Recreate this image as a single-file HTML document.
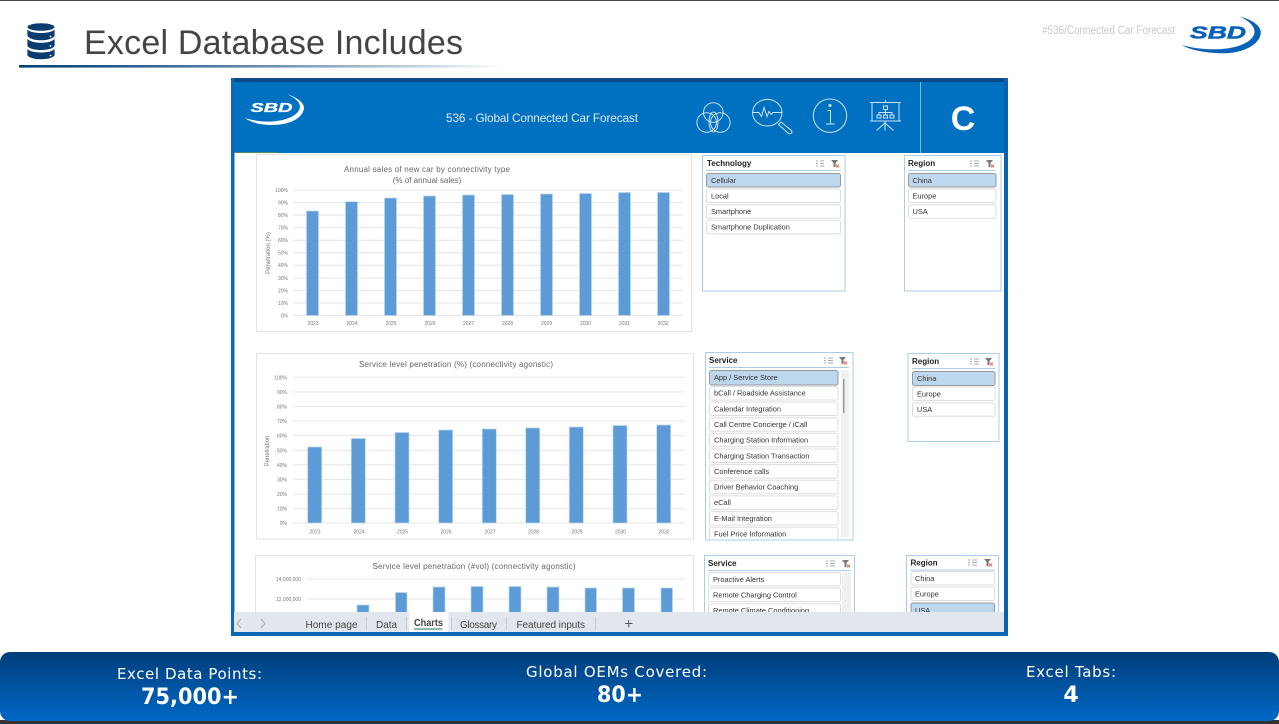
<!DOCTYPE html>
<html><head><meta charset="utf-8"><title>Excel Database Includes</title>
<style>
html,body{margin:0;padding:0;background:#fff}
body{width:1279px;height:724px;overflow:hidden}
svg{display:block}
text{font-family:"Liberation Sans",sans-serif}
.dj{font-family:"DejaVu Sans",sans-serif}
.ax{font-size:5px;fill:#777}
.t{font-size:8px;fill:#666}
.st{font-size:8px;font-weight:bold;fill:#222}
.it{font-size:7.4px;fill:#333}
.tab{font-size:10px;fill:#444}
</style></head><body>
<svg width="1279" height="724" viewBox="0 0 1279 724" xmlns="http://www.w3.org/2000/svg">
<defs>
<linearGradient id="ul" x1="0" x2="1" y1="0" y2="0"><stop offset="0" stop-color="#004078"/><stop offset=".25" stop-color="#2f6393"/><stop offset="1" stop-color="#004078" stop-opacity="0"/></linearGradient>
<linearGradient id="ft" x1="0" x2="0" y1="0" y2="1"><stop offset="0" stop-color="#003d7a"/><stop offset="1" stop-color="#0068c6"/></linearGradient>
<filter id="b" x="0" y="0" width="100%" height="100%"><feGaussianBlur stdDeviation="0.3"/></filter>
<clipPath id="sv1"><rect x="706" y="369" width="146" height="170"/></clipPath>
</defs>
<rect width="1279" height="724" fill="#fff"/>
<rect width="1279" height="1" fill="#444"/>

<!-- DB icon -->
<g fill="#0b3c70">
<ellipse cx="41" cy="27" rx="13.5" ry="3.8"/>
<path d="M27.4 29.5C30 32 35 33 41 33s11-1 13.6-3.5V36c-2 3-8 4.300-13.600 4.300S29.400 39 27.400 36z"/>
<path d="M27.400 39C30 41.500 35 42.800 41 42.800s11-1.300 13.600-3.800v7c-2 3-8 4-13.600 4s-11.600-1-13.600-4z"/>
<path d="M27.400 49C30 51.500 35 52.500 41 52.500s11-1 13.600-3.500v6.500C52.600 58 47 59.200 41 59.200s-11.600-1.200-13.600-3.700z"/>
</g>
<g fill="#fff"><circle cx="50.500" cy="36.500" r=".9"/><circle cx="50.500" cy="46" r=".9"/><circle cx="50.500" cy="55.500" r=".9"/></g>

<text x="84" y="54" font-size="34" fill="#444" textLength="379" lengthAdjust="spacing">Excel Database Includes</text>
<rect x="19" y="65" width="487" height="2.600" fill="url(#ul)"/>

<text x="1042" y="34" font-size="11.500" fill="#c9c9c9" textLength="133" lengthAdjust="spacingAndGlyphs">#536/Connected Car Forecast</text>
<text x="1190" y="38.300" font-size="17.500" font-weight="bold" font-style="italic" fill="#0a62b8" stroke="#0a62b8" stroke-width=".5" textLength="56" lengthAdjust="spacingAndGlyphs">SBD</text>
<path d="M1240 16.500C1253 20 1261 26 1260.800 33C1260 45 1242 53.500 1223 53.300C1205 53 1190 50 1181.700 45C1194 48.500 1208 50 1222 49C1240 47.500 1254 41 1254.500 32C1254.500 26 1249 21 1240 16.500Z" fill="#0a62b8"/>

<g filter="url(#b)">
<!-- Excel frame -->
<rect x="231" y="78" width="777" height="558" fill="#fff"/>
<rect x="231" y="78" width="777" height="4" fill="#0a4a84"/>
<rect x="231" y="78" width="3.500" height="558" fill="#0a68b8"/>
<rect x="1004" y="78" width="4" height="558" fill="#0a62b0"/>
<rect x="234" y="82" width="770" height="71" fill="#0070c0"/>
<rect x="234" y="152" width="44" height="1" fill="#4f8a5c"/>
<rect x="920" y="82" width="1" height="71" fill="#7fb2dd"/>
<text x="250.500" y="112" font-size="13" font-weight="bold" font-style="italic" fill="#fff" stroke="#fff" stroke-width=".3" textLength="42" lengthAdjust="spacingAndGlyphs">SBD</text>
<path d="M287 94C298 98 304 103 304 108C303 118 290 125 272 125C260 125 250 122 245 118C254 121 264 122 272 121.500C287 120.500 299 115 300 107C300 102 295 98 287 94Z" fill="#fff"/>
<text x="446" y="122" font-size="11.800" fill="#dfeaf5" textLength="192" lengthAdjust="spacing">536 - Global Connected Car Forecast</text>
<text x="963" y="130" font-size="34" font-weight="bold" fill="#fff" text-anchor="middle">C</text>

<!-- header icons -->
<g fill="none" stroke="#cfe2f3" stroke-width="1">
<circle cx="713.300" cy="112.500" r="9.800"/><circle cx="706.700" cy="122.500" r="9.800"/><circle cx="720.300" cy="122.500" r="9.800"/>
<ellipse cx="713.500" cy="122" rx="4.500" ry="10"/>
<ellipse cx="767.300" cy="112.700" rx="14.700" ry="13.300"/>
<path d="M753 112.500h6l2.500 4 2.500-9 3 9 2-5 2 3 2-2h9"/>
<path d="M778.500 124.500l2.500-2.500 10.500 8.500c1.500 2-1 4-3 3z"/>
<circle cx="830" cy="115.700" r="16.700"/>
<path d="M827.500 110.500h3v13M826 124h8.500"/><circle cx="830" cy="105.500" r="1" fill="#cfe2f3"/>
<path d="M870 102.500h31M872 102.500v18.500M899 102.500v18.500M870 121h31M885.500 100v2.500M885 121v2M885 123l-8.500 7.500M885 123l8.500 7.500M885 123v7.500"/>
<path d="M885.500 109.500v3M879 115v-2.500h13v2.500M885.500 112.500v2.500"/>
<rect x="883.500" y="106" width="4" height="3.500"/><rect x="877" y="115" width="4" height="3"/><rect x="883.500" y="115" width="4" height="3"/><rect x="890" y="115" width="4" height="3"/>
</g>

<!-- Chart 1 -->
<rect x="256.500" y="154.500" width="435" height="177" fill="#fff" stroke="#e2e2e2"/>
<text x="427" y="172" class="t" text-anchor="middle" textLength="166" lengthAdjust="spacing">Annual sales of new car by connectivity type</text>
<text x="427" y="183" class="t" text-anchor="middle">(% of annual sales)</text>
<path stroke="#e4e4e4" stroke-width="1" d="M293 190H683M293 202.600H683M293 215.100H683M293 227.700H683M293 240.200H683M293 252.800H683M293 265.300H683M293 277.900H683M293 290.400H683M293 303H683M293 315.500H683"/>
<g fill="#5b9bd5" stroke="#bcd7ef" stroke-width=".7">
<rect x="306.500" y="211" width="12" height="104.500"/><rect x="345.500" y="201.700" width="12" height="113.800"/><rect x="384.500" y="198" width="12" height="117.500"/><rect x="423.500" y="196" width="12" height="119.500"/><rect x="462.500" y="195" width="12" height="120.500"/><rect x="501.500" y="194.500" width="12" height="121"/><rect x="540.500" y="194" width="12" height="121.500"/><rect x="579.500" y="193.500" width="12" height="122"/><rect x="618.500" y="192.500" width="12" height="123"/><rect x="657.500" y="192.500" width="12" height="123"/>
</g>
<g class="ax" text-anchor="end"><text x="288" y="192">100%</text><text x="288" y="204.500">90%</text><text x="288" y="217">80%</text><text x="288" y="229.500">70%</text><text x="288" y="242">60%</text><text x="288" y="254.700">50%</text><text x="288" y="267">40%</text><text x="288" y="279.800">30%</text><text x="288" y="292.300">20%</text><text x="288" y="305">10%</text><text x="288" y="317.500">0%</text></g>
<g class="ax" text-anchor="middle"><text x="313" y="325">2023</text><text x="352" y="325">2024</text><text x="391" y="325">2025</text><text x="430" y="325">2026</text><text x="468.500" y="325">2027</text><text x="507.500" y="325">2028</text><text x="546.500" y="325">2029</text><text x="585.500" y="325">2030</text><text x="624.500" y="325">2031</text><text x="663" y="325">2032</text></g>
<text transform="translate(270,253) rotate(-90)" font-size="6" fill="#777" text-anchor="middle">Penetration (%)</text>

<!-- Chart 2 -->
<rect x="256.500" y="353.500" width="437" height="185.500" fill="#fff" stroke="#e2e2e2"/>
<text x="456" y="367" class="t" text-anchor="middle" font-size="8.500" textLength="194" lengthAdjust="spacing">Service level penetration (%) (connectivity agonstic)</text>
<path stroke="#e6e6e6" stroke-width="1" d="M293 377.300H685M293 391.900H685M293 406.500H685M293 421H685M293 435.600H685M293 450.200H685M293 464.800H685M293 479.400H685M293 494H685M293 508.600H685M293 523H685"/>
<g fill="#5b9bd5" stroke="#bcd7ef" stroke-width=".7">
<rect x="307.700" y="447" width="14" height="76"/><rect x="351.300" y="438.500" width="14" height="84.500"/><rect x="395" y="432.500" width="14" height="90.500"/><rect x="438.700" y="430" width="14" height="93"/><rect x="482.300" y="429" width="14" height="94"/><rect x="525.700" y="428" width="14" height="95"/><rect x="569.300" y="427" width="14" height="96"/><rect x="613" y="425.500" width="14" height="97.500"/><rect x="656.700" y="425" width="14" height="98"/>
</g>
<g class="ax" text-anchor="end"><text x="287" y="379.500">100%</text><text x="287" y="394">90%</text><text x="287" y="408.600">80%</text><text x="287" y="423">70%</text><text x="287" y="437.700">60%</text><text x="287" y="452.300">50%</text><text x="287" y="467">40%</text><text x="287" y="481.500">30%</text><text x="287" y="496">20%</text><text x="287" y="510.700">10%</text><text x="287" y="525">0%</text></g>
<g class="ax" text-anchor="middle"><text x="315" y="533.500">2023</text><text x="359" y="533.500">2024</text><text x="402.500" y="533.500">2025</text><text x="446" y="533.500">2026</text><text x="490" y="533.500">2027</text><text x="533.500" y="533.500">2028</text><text x="577" y="533.500">2029</text><text x="620.500" y="533.500">2030</text><text x="664" y="533.500">2032</text></g>
<text transform="translate(269,451) rotate(-90)" font-size="6" fill="#777" text-anchor="middle">Penetration</text>

<!-- Chart 3 -->
<rect x="255.500" y="555.500" width="438" height="70" fill="#fff" stroke="#e2e2e2"/>
<text x="474" y="569" class="t" text-anchor="middle" textLength="203" lengthAdjust="spacing">Service level penetration (#vol) (connectivity agonstic)</text>
<path stroke="#e4e4e4" d="M307 579H685M307 599H685"/>
<g fill="#5b9bd5" stroke="#bcd7ef" stroke-width=".7">
<rect x="357" y="605" width="12" height="10"/><rect x="395.500" y="592.500" width="11.500" height="22"/><rect x="433" y="587" width="12" height="28"/><rect x="471" y="586.500" width="12" height="28"/><rect x="509" y="586.500" width="12" height="28"/><rect x="547" y="587" width="12" height="28"/><rect x="585" y="588" width="11.500" height="28"/><rect x="622.500" y="588" width="12" height="28"/><rect x="661" y="588" width="11.500" height="28"/>
</g>
<g class="ax" text-anchor="end"><text x="301" y="581">14,000,000</text><text x="301" y="601">12,000,000</text></g>

<!-- Slicer: Technology -->
<rect x="702.500" y="155.500" width="142.500" height="135.500" fill="#fff" stroke="#a9cdea"/>
<text x="707" y="166" class="st">Technology</text>
<path stroke="#a9cdea" d="M706 170.500H841"/>
<rect x="706.500" y="173.500" width="134" height="13.500" rx="2" fill="#bdd7ee" stroke="#999"/>
<rect x="706.500" y="189" width="134" height="13.500" rx="2" fill="#fff" stroke="#ddd"/>
<rect x="706.500" y="204.700" width="134" height="13.500" rx="2" fill="#fff" stroke="#ddd"/>
<rect x="706.500" y="220.300" width="134" height="13.500" rx="2" fill="#fff" stroke="#ddd"/>
<text x="711" y="183" class="it">Cellular</text><text x="711" y="198.500" class="it">Local</text><text x="711" y="214" class="it">Smartphone</text><text x="711" y="229.700" class="it">Smartphone Duplication</text>
<path stroke="#aaa" fill="none" d="M820 161h4M820 163.500h4M820 166h4M816 161h2M816 163.500h2M816 166h2"/>
<path fill="#777" d="M831 160h7l-2.500 3v4h-2v-4z"/><path stroke="#e2705a" d="M836 164.500l3 3M839 164.500l-3 3"/>

<!-- Slicer: Region 1 -->
<rect x="904.500" y="155.500" width="96.500" height="135.500" fill="#fff" stroke="#a9cdea"/>
<text x="908" y="166" class="st">Region</text>
<path stroke="#a9cdea" d="M908 170.500H996"/>
<rect x="908.500" y="173.500" width="87.500" height="13.500" rx="2" fill="#bdd7ee" stroke="#999"/>
<rect x="908.500" y="189" width="87.500" height="13.500" rx="2" fill="#fff" stroke="#ddd"/>
<rect x="908.500" y="204.700" width="87.500" height="13.500" rx="2" fill="#fff" stroke="#ddd"/>
<text x="912.500" y="183" class="it">China</text><text x="912.500" y="198.500" class="it">Europe</text><text x="912.500" y="214" class="it">USA</text>
<path stroke="#aaa" fill="none" d="M974 161h5M974 163.500h5M974 166h5M970 161h2M970 163.500h2M970 166h2"/>
<path fill="#777" d="M986 160h7l-2.500 3v4h-2v-4z"/><path stroke="#e2705a" d="M991 164.500l3 3M994 164.500l-3 3"/>

<!-- Slicer: Service -->
<rect x="705.500" y="352.500" width="147.500" height="187.500" fill="#fff" stroke="#a9cdea"/>
<text x="709" y="363" class="st">Service</text>
<path stroke="#a9cdea" d="M709 367.500H849"/>
<rect x="841" y="370" width="8" height="167" fill="#f0f0f0"/>
<rect x="843" y="379" width="1.500" height="34" fill="#999"/>
<g clip-path="url(#sv1)">
<rect x="709.500" y="370.500" width="128.500" height="14.500" rx="2" fill="#bdd7ee" stroke="#999"/>
<g fill="#fff" stroke="#ddd">
<rect x="709.500" y="386.500" width="128.500" height="13.500" rx="2"/><rect x="709.500" y="402" width="128.500" height="13.500" rx="2"/><rect x="709.500" y="417.700" width="128.500" height="13.500" rx="2"/><rect x="709.500" y="433.300" width="128.500" height="13.500" rx="2"/><rect x="709.500" y="449" width="128.500" height="13.500" rx="2"/><rect x="709.500" y="464.600" width="128.500" height="13.500" rx="2"/><rect x="709.500" y="480.300" width="128.500" height="13.500" rx="2"/><rect x="709.500" y="495.900" width="128.500" height="13.500" rx="2"/><rect x="709.500" y="511.600" width="128.500" height="13.500" rx="2"/><rect x="709.500" y="527.200" width="128.500" height="13.500" rx="2"/>
</g>
<text x="714" y="380" class="it">App / Service Store</text><text x="714" y="395.700" class="it">bCall / Roadside Assistance</text><text x="714" y="411.300" class="it">Calendar Integration</text><text x="714" y="427" class="it">Call Centre Concierge / iCall</text><text x="714" y="442.600" class="it">Charging Station Information</text><text x="714" y="458.300" class="it">Charging Station Transaction</text><text x="714" y="473.900" class="it">Conference calls</text><text x="714" y="489.600" class="it">Driver Behavior Coaching</text><text x="714" y="505.200" class="it">eCall</text><text x="714" y="520.900" class="it">E-Mail Integration</text><text x="714" y="536.500" class="it">Fuel Price Information</text>
</g>
<path stroke="#aaa" fill="none" d="M828 358h5M828 360.500h5M828 363h5M824 358h2M824 360.500h2M824 363h2"/>
<path fill="#777" d="M839 357h7l-2.500 3v4h-2v-4z"/><path stroke="#e2705a" d="M844 361.500l3 3M847 361.500l-3 3"/>

<!-- Slicer: Region 2 -->
<rect x="908" y="353.500" width="91" height="88" fill="#fff" stroke="#a9cdea"/>
<text x="912" y="364" class="st">Region</text>
<path stroke="#a9cdea" d="M912 368.500H995"/>
<rect x="912.500" y="371.500" width="82.500" height="14" rx="2" fill="#bdd7ee" stroke="#999"/>
<rect x="912.500" y="387" width="82.500" height="13.500" rx="2" fill="#fff" stroke="#ddd"/>
<rect x="912.500" y="402.700" width="82.500" height="13.500" rx="2" fill="#fff" stroke="#ddd"/>
<text x="917" y="381" class="it">China</text><text x="917" y="396.500" class="it">Europe</text><text x="917" y="412" class="it">USA</text>
<path stroke="#aaa" fill="none" d="M974 359h5M974 361.500h5M974 364h5M970 359h2M970 361.500h2M970 364h2"/>
<path fill="#777" d="M985 358h7l-2.500 3v4h-2v-4z"/><path stroke="#e2705a" d="M990 362.500l3 3M993 362.500l-3 3"/>

<!-- Slicer: Service 3 -->
<rect x="704.500" y="555.500" width="150" height="70" fill="#fff" stroke="#a9cdea"/>
<text x="708" y="566" class="st">Service</text>
<path stroke="#a9cdea" d="M708 570.500H851"/>
<rect x="842" y="572" width="9" height="45" fill="#f0f0f0"/>
<g fill="#fff" stroke="#ddd"><rect x="708.500" y="572.500" width="132" height="13.500" rx="2"/><rect x="708.500" y="588" width="132" height="13.500" rx="2"/><rect x="708.500" y="603.700" width="132" height="13.500" rx="2"/></g>
<text x="713" y="582" class="it">Proactive Alerts</text><text x="713" y="597.500" class="it">Remote Charging Control</text><text x="713" y="613" class="it">Remote Climate Conditioning</text>
<path stroke="#aaa" fill="none" d="M830 561h5M830 563.500h5M830 566h5M826 561h2M826 563.500h2M826 566h2"/>
<path fill="#777" d="M842 560h7l-2.500 3v4h-2v-4z"/><path stroke="#e2705a" d="M847 564.500l3 3M850 564.500l-3 3"/>

<!-- Slicer: Region 3 -->
<rect x="906.500" y="555.500" width="92" height="70" fill="#fff" stroke="#a9cdea"/>
<text x="910.500" y="565.500" class="st">Region</text>
<path stroke="#a9cdea" d="M910 570H995"/>
<rect x="911" y="571.500" width="83.500" height="13.500" rx="2" fill="#fff" stroke="#ddd"/>
<rect x="911" y="587" width="83.500" height="13.500" rx="2" fill="#fff" stroke="#ddd"/>
<rect x="911" y="603" width="83.500" height="14" rx="2" fill="#bdd7ee" stroke="#999"/>
<text x="915" y="581" class="it">China</text><text x="915" y="596.500" class="it">Europe</text><text x="915" y="613" class="it">USA</text>
<path stroke="#aaa" fill="none" d="M972 560h5M972 562.500h5M972 565h5M968 560h2M968 562.500h2M968 565h2"/>
<path fill="#777" d="M984 559h7l-2.500 3v4h-2v-4z"/><path stroke="#e2705a" d="M989 563.500l3 3M992 563.500l-3 3"/>

<!-- Tab bar -->
<rect x="234" y="612" width="770" height="20" fill="#e2e6ed"/>
<rect x="231" y="632" width="777" height="4" fill="#0a66b6"/>
<rect x="409" y="612" width="39.500" height="20" rx="2" fill="#fff"/>
<path stroke="#c8ccd4" d="M366.500 617V630M406.500 617V630M451.500 617V630M506.500 617V630M595.500 617V630"/>
<path stroke="#a9adb5" fill="none" d="M241 619l-4 4.500 4 4.500M261 619l4 4.500-4 4.500"/>
<text x="305.500" y="628" class="tab" textLength="52" lengthAdjust="spacing">Home page</text>
<text x="376" y="628" class="tab">Data</text>
<text x="414" y="626" class="tab" fill="#333" font-weight="bold" textLength="29" lengthAdjust="spacingAndGlyphs">Charts</text>
<rect x="414" y="628.500" width="28.500" height="1" fill="#1f7a4d"/>
<text x="460" y="628" class="tab" textLength="37" lengthAdjust="spacing">Glossary</text>
<text x="516.500" y="628" class="tab" textLength="68.500" lengthAdjust="spacing">Featured inputs</text>
<path stroke="#555" d="M625 623.500h7.500M628.750 620v7.500"/>
</g>

<!-- Footer -->
<rect x="0" y="720" width="1279" height="4" fill="#333"/>
<rect x="0" y="652" width="1279" height="69" rx="10" fill="url(#ft)"/>
<g fill="#fff" text-anchor="middle">
<text x="189.500" y="679" class="dj" font-size="15" textLength="145" lengthAdjust="spacing">Excel Data Points:</text>
<text x="190" y="704" class="dj" font-size="22" font-weight="bold" textLength="98" lengthAdjust="spacingAndGlyphs">75,000+</text>
<text x="616.500" y="677" class="dj" font-size="15" textLength="181" lengthAdjust="spacing">Global OEMs Covered:</text>
<text x="620" y="702" class="dj" font-size="22" font-weight="bold" textLength="46" lengthAdjust="spacingAndGlyphs">80+</text>
<text x="1071" y="677" class="dj" font-size="15" textLength="90" lengthAdjust="spacing">Excel Tabs:</text>
<text x="1071" y="702" class="dj" font-size="22" font-weight="bold">4</text>
</g>
</svg>
</body></html>
